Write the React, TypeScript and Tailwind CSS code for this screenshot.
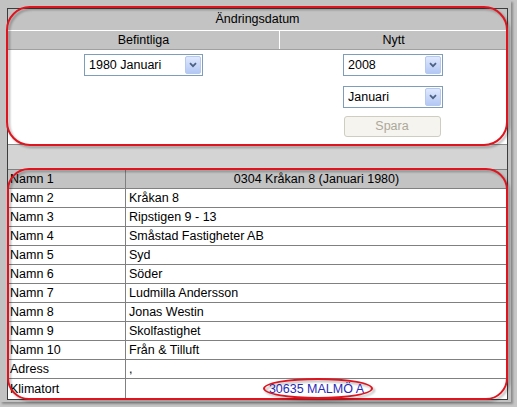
import React from "react";

const rows: [string, string][] = [
  ["Namn 2", "Kråkan 8"],
  ["Namn 3", "Ripstigen 9 - 13"],
  ["Namn 4", "Småstad Fastigheter AB"],
  ["Namn 5", "Syd"],
  ["Namn 6", "Söder"],
  ["Namn 7", "Ludmilla Andersson"],
  ["Namn 8", "Jonas Westin"],
  ["Namn 9", "Skolfastighet"],
  ["Namn 10", "Från & Tilluft"],
  ["Adress", ","],
];

function Select({ value, width }: { value: string; width: string }) {
  return (
    <div className={`${width} h-[22px] border border-[#7f9db9] bg-white flex items-center justify-between`}>
      <span className="pl-[4px] leading-none">{value}</span>
      <div className="w-[16px] h-[18px] mr-[1px] rounded-[2px] bg-gradient-to-b from-[#dfe8fd] to-[#b4c8f4] border border-[#b7c9ee] flex items-center justify-center">
        <svg width="8" height="6" viewBox="0 0 8 6">
          <path d="M1 1.2 L4 4.2 L7 1.2" fill="none" stroke="#4d6185" strokeWidth="1.8" />
        </svg>
      </div>
    </div>
  );
}

export default function App() {
  return (
    <div
      className="relative w-[517px] h-[407px] bg-[#c6c6c6] text-[12.5px] text-black overflow-hidden"
      style={{ fontFamily: '"Liberation Sans", Arial, sans-serif' }}
    >
      <div className="w-[511px] h-[402px] bg-[#c2c2c2] shadow-[2px_2px_2px_#8c8c8c] pl-[7px] pt-[8px]">
        <div className="w-[501px] h-[392px] border border-[#3c3c3c] bg-[#d4d4d4] flex flex-col">
          {/* Ändringsdatum */}
          <div className="h-[22px] shrink-0 bg-[#c3c3c3] border-b border-white flex items-center justify-center">
            Ändringsdatum
          </div>
          <div className="h-[19px] shrink-0 bg-[#c3c3c3] border-b border-[#a0a0a0] flex">
            <div className="w-[271px] flex items-center justify-center">Befintliga</div>
            <div className="flex-1 border-l border-white flex items-center justify-center">Nytt</div>
          </div>
          <div className="h-[95px] shrink-0 bg-white border-b border-[#8a8a8a] flex">
            <div className="w-[271px] flex justify-center pt-[4px]">
              <Select value="1980 Januari" width="w-[119px]" />
            </div>
            <div className="flex-1 flex flex-col items-center pt-[4px]">
              <Select value="2008" width="w-[100px]" />
              <div className="h-[10px]" />
              <Select value="Januari" width="w-[100px]" />
              <div className="h-[8px]" />
              <button
                disabled
                className="w-[97px] h-[21px] rounded-[3px] border border-[#cfccc1] bg-[#f5f4ef] text-[#aca899] ml-[-2px]"
              >
                Spara
              </button>
            </div>
          </div>
          <div className="h-[24px] shrink-0" />
          {/* Data table */}
          <div className="flex-1 bg-white border-t border-[#808080] flex flex-col">
            <div className="h-[19px] bg-[#c3c3c3] border-b border-[#808080] flex">
              <div className="w-[118px] border-r border-[#808080] pl-[2px] flex items-center">Namn 1</div>
              <div className="flex-1 flex items-center justify-center">0304 Kråkan 8 (Januari 1980)</div>
            </div>
            {rows.map(([k, v]) => (
              <div key={k} className="h-[19px] border-b border-[#808080] flex">
                <div className="w-[118px] border-r border-[#808080] pl-[2px] flex items-center">{k}</div>
                <div className="flex-1 pl-[3px] flex items-center">{v}</div>
              </div>
            ))}
            <div className="flex-1 flex">
              <div className="w-[118px] border-r border-[#808080] pl-[2px] flex items-center">Klimatort</div>
              <div className="flex-1 flex items-center justify-center text-[#2a2ab8]">30635 MALMÖ A</div>
            </div>
          </div>
        </div>
      </div>

      {/* red annotations */}
      <div className="absolute left-[6px] top-[6px] w-[502px] h-[140px] rounded-[24px] border-2 border-[#e0141e] drop-shadow-[2px_2px_1px_rgba(0,0,0,0.3)]" />
      <div className="absolute left-[7px] top-[168px] w-[501px] h-[232px] rounded-[22px] border-2 border-[#e0141e] drop-shadow-[2px_2px_1px_rgba(0,0,0,0.3)]" />
      <div className="absolute left-[263px] top-[378px] w-[110px] h-[21px] rounded-[50%] border-2 border-[#e0141e] drop-shadow-[2px_2px_1px_rgba(0,0,0,0.3)]" />
    </div>
  );
}
